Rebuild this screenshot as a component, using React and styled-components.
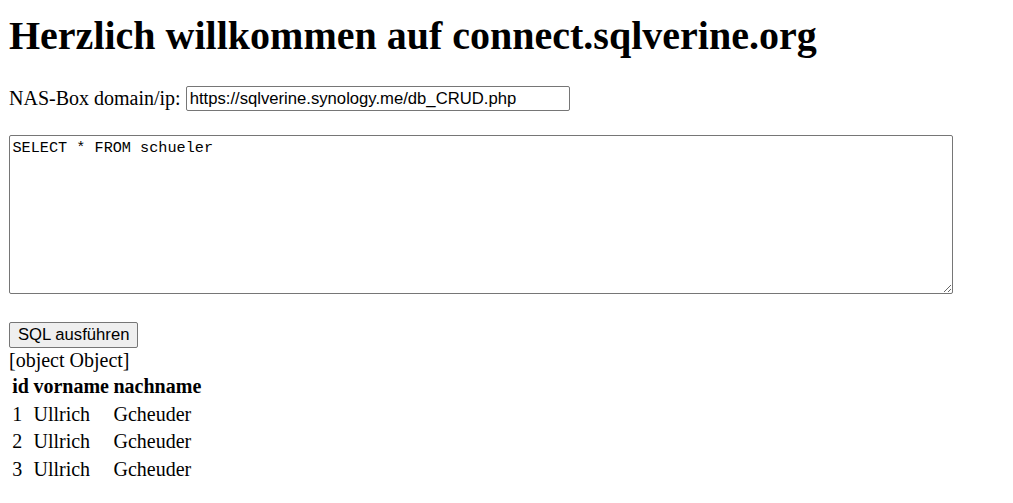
import React from "react";
import styled, { createGlobalStyle } from "styled-components";

const Global = createGlobalStyle`
  html, body { background: #fff; }
  body {
    margin: 0;
    font-family: "Liberation Serif", "Times New Roman", serif;
    font-size: 20px;
    color: #000;
  }
`;

const Page = styled.div`
  padding: 0 9px;
`;

const Title = styled.h1`
  font-family: "Liberation Serif", serif;
  font-size: 40px;
  font-weight: bold;
  line-height: 46px;
  margin: 12.5px 0 27.5px 0;
`;

const FieldRow = styled.div`
  display: flex;
  align-items: center;
  gap: 5px;
  height: 25px;
  line-height: 23px;
`;

const Label = styled.label``;

const UrlInput = styled.input`
  box-sizing: border-box;
  width: 384px;
  height: 25px;
  border: 1px solid #767676;
  border-radius: 2px;
  padding: 1px 3px;
  font-family: "Liberation Sans", Arial, sans-serif;
  font-size: 16.67px;
  color: #000;
  outline: none;
`;

const Query = styled.textarea`
  display: block;
  box-sizing: border-box;
  width: 944px;
  height: 159px;
  margin: 24px 0 0 0;
  border: 1px solid #767676;
  border-radius: 2px;
  padding: 3px 2.5px;
  font-family: "Liberation Mono", Consolas, monospace;
  font-size: 15.2px;
  line-height: 19px;
  color: #000;
  resize: both;
  outline: none;
`;

const RunButton = styled.button`
  display: block;
  box-sizing: border-box;
  margin-top: 28px;
  height: 26px;
  padding: 0 8px;
  background: #efefef;
  border: 1px solid #767676;
  border-radius: 2px;
  font-family: "Liberation Sans", Arial, sans-serif;
  font-size: 16.67px;
  color: #000;
`;

const Result = styled.div`
  line-height: 24px;
`;

const Table = styled.table`
  border-spacing: 2.5px;
  font-size: 20px;
`;

const Th = styled.th`
  padding: 1px 1.25px;
  text-align: left;
  line-height: 23.5px;
`;

const Td = styled.td`
  padding: 1px 1.25px;
  line-height: 23.5px;
`;

const rows = [
  { id: 1, vorname: "Ullrich", nachname: "Gcheuder" },
  { id: 2, vorname: "Ullrich", nachname: "Gcheuder" },
  { id: 3, vorname: "Ullrich", nachname: "Gcheuder" },
];

export default function App() {
  return (
    <Page>
      <Global />
      <Title>Herzlich willkommen auf connect.sqlverine.org</Title>
      <FieldRow>
        <Label htmlFor="nas">NAS-Box domain/ip:</Label>
        <UrlInput id="nas" defaultValue="https://sqlverine.synology.me/db_CRUD.php" />
      </FieldRow>
      <Query defaultValue="SELECT * FROM schueler" />
      <RunButton>SQL ausführen</RunButton>
      <Result>[object Object]</Result>
      <Table>
        <thead>
          <tr>
            <Th>id</Th>
            <Th>vorname</Th>
            <Th>nachname</Th>
          </tr>
        </thead>
        <tbody>
          {rows.map((r) => (
            <tr key={r.id}>
              <Td>{r.id}</Td>
              <Td>{r.vorname}</Td>
              <Td>{r.nachname}</Td>
            </tr>
          ))}
        </tbody>
      </Table>
    </Page>
  );
}
